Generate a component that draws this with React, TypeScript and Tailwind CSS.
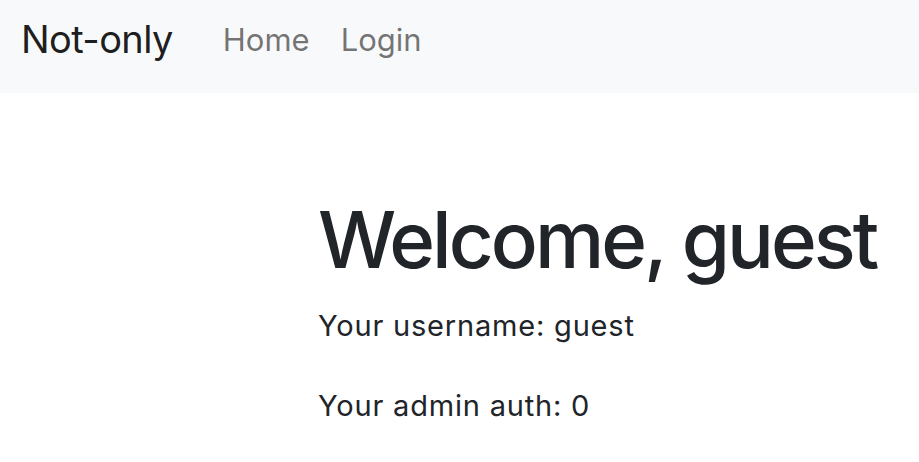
import React from "react";

const font = { fontFamily: "Inter, 'Noto Sans', sans-serif" };

export default function App() {
  return (
    <div className="min-h-screen bg-white text-[#212529]" style={font}>
      {/* Navbar */}
      <nav className="h-[93px] bg-[#f8f9fa] flex items-start px-[21px]">
        <a className="mt-[20px] text-[38px] text-black/90 tracking-[-0.6px] mr-[50px] leading-none">Not-only</a>
        <div className="mt-[24px] flex items-start gap-[31px] text-[31px] text-black/55 leading-none">
          <a>Home</a>
          <a>Login</a>
        </div>
      </nav>

      {/* Content */}
      <main className="pl-[318px] pt-[100px]">
        <h1 className="text-[78px] font-medium leading-[1.2] tracking-[-3px] mb-[17px]">Welcome, guest</h1>
        <p className="text-[29px] leading-[1.5] tracking-[0.8px] mb-[37px]">Your username: guest</p>
        <p className="text-[29px] leading-[1.5] tracking-[0.8px]">Your admin auth: 0</p>
      </main>
    </div>
  );
}
